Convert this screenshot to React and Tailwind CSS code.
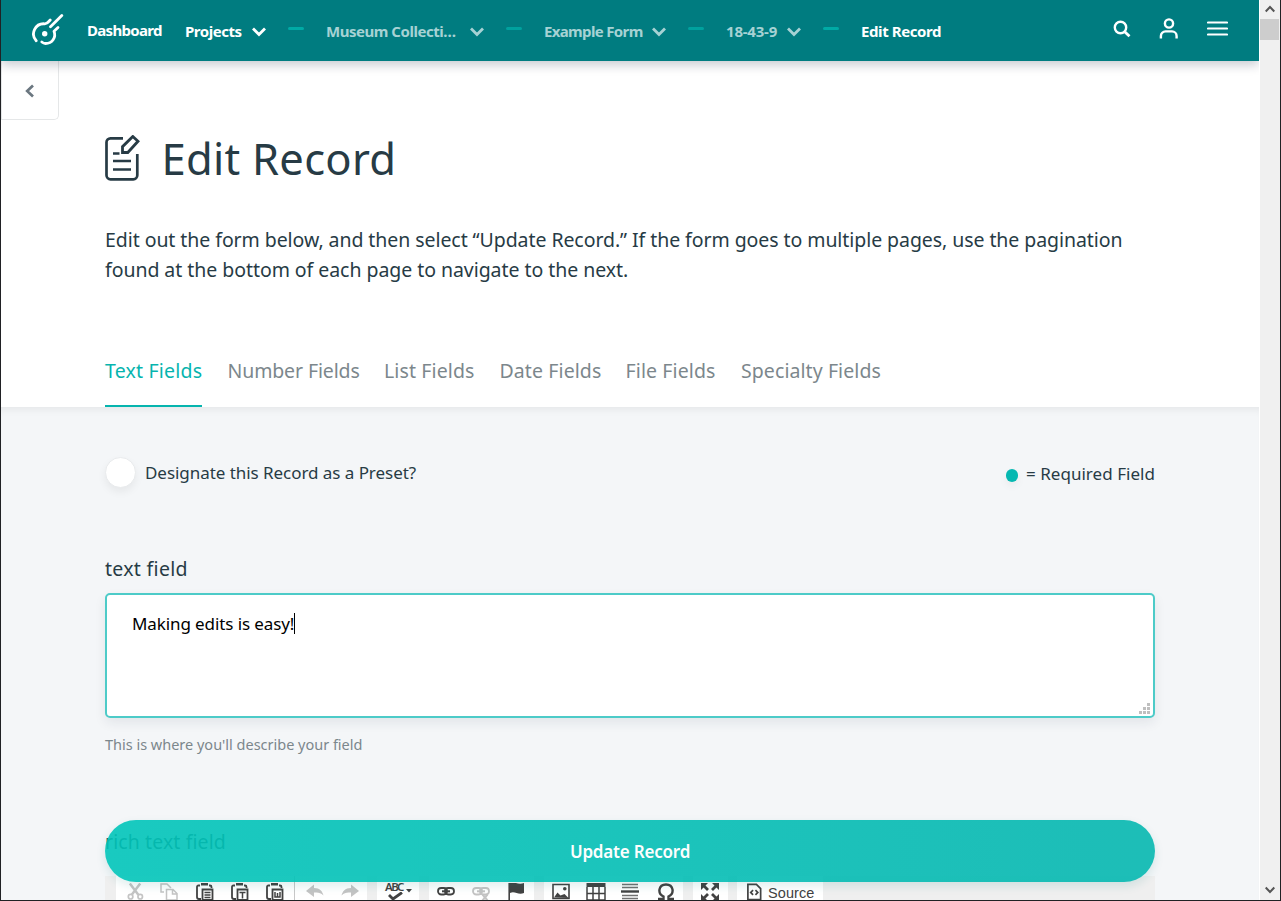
import React from "react";

function Chevron({ className }) {
  return (
    <svg className={"h-[10px] w-[14px] shrink-0 " + className} viewBox="0 0 14 10" fill="none" stroke="currentColor" strokeWidth="2.8">
      <path d="M1 1.4 7 7.4 13 1.4" />
    </svg>
  );
}

function Dash({ className }) {
  return <span className={"mb-[4px] h-[3px] w-4 shrink-0 rounded-full bg-[#00aaa5] " + className} />;
}

function Logo() {
  return (
    <svg className="h-[32px] w-[32px] shrink-0" viewBox="0 0 32 32" fill="none" stroke="#fff" strokeWidth="2.800" strokeLinecap="round" strokeLinejoin="round">
      <path d="M4.200 26.800A10.200 10.200 0 0 1 12.600 9.800C15 10 16 8.500 18.200 6" />
      <path d="M29.800 1.500 18.500 12.800" />
      <path d="M26 13.500 22 17.200C24.500 23.500 20 29.500 13.500 29.500 12 29.500 11 29 9.800 28" />
      <circle cx="12.700" cy="19.700" r="2.700" fill="#fff" stroke="none" />
    </svg>
  );
}

function Header() {
  return (
    <header className="relative z-20 flex h-[61px] shrink-0 items-center bg-[#007c80] pl-[31px] text-[15px] font-bold text-white shadow-[0_4px_10px_rgba(10,25,50,0.22)]">
      <div className="mb-[2px] flex">
        <Logo />
      </div>
      <span className="ml-[23px] w-[76px] whitespace-nowrap tracking-[-0.68px]">Dashboard</span>
      <span className="ml-[22px] mt-[2px] w-[58px] whitespace-nowrap tracking-[-0.45px]">Projects</span>
      <Chevron className="ml-[9px] mt-[2px]" />
      <Dash className="ml-[22px]" />
      <span className="ml-[22px] mt-[2px] w-[131px] whitespace-nowrap tracking-[-0.47px] text-[#a6d2d4]">Museum Collecti…</span>
      <Chevron className="ml-[13px] mt-[2px] text-[#a6d2d4]" />
      <Dash className="ml-[22px] opacity-80" />
      <span className="ml-[22px] mt-[2px] w-[100px] whitespace-nowrap tracking-[-0.65px] text-[#a6d2d4]">Example Form</span>
      <Chevron className="ml-[8px] mt-[2px] text-[#a6d2d4]" />
      <Dash className="ml-[22px] opacity-80" />
      <span className="ml-[22px] mt-[2px] w-[52px] whitespace-nowrap tracking-[-0.2px] text-[#a6d2d4]">18-43-9</span>
      <Chevron className="ml-[9px] mt-[2px] text-[#a6d2d4]" />
      <Dash className="ml-[22px]" />
      <span className="ml-[22px] mt-[2px] w-[82px] whitespace-nowrap tracking-[-0.4px]">Edit Record</span>
      <div className="ml-auto mr-[31px] flex items-center">
        <svg className="mb-[3px] mr-[28px] h-[18px] w-[18px]" viewBox="0 0 18 18" fill="none" stroke="currentColor" strokeWidth="2.400">
          <circle cx="7.500" cy="7.500" r="5.700" />
          <path d="m11.700 11.700 4.800 4.600" strokeWidth="2.800" />
        </svg>
        <svg className="mb-[4px] mr-[28px] h-[21px] w-[20px]" viewBox="0 0 20 21" fill="none" stroke="currentColor" strokeWidth="2.400">
          <circle cx="10" cy="5.500" r="4.100" />
          <path d="M1.900 20.500V18a4.600 4.600 0 0 1 4.600-4.600h6.500a4.600 4.600 0 0 1 4.600 4.600v2.500" />
        </svg>
        <svg className="mb-[4px] h-[15px] w-[21px]" viewBox="0 0 21 15" fill="none" stroke="currentColor" strokeWidth="2.200" strokeLinecap="round">
          <path d="M1 1.500h19M1 7.500h19M1 13.500h19" />
        </svg>
      </div>
    </header>
  );
}

function Tabs() {
  return (
    <nav className="flex h-[53px] whitespace-nowrap text-[19.5px] leading-[34px] text-[#7c878c]">
      <span className="w-[97px] border-b-2 border-[#06b4ae] tracking-[0.2px] text-[#06b4ae]">Text Fields</span>
      <span className="ml-[25.5px] w-[131.5px] tracking-[-0.12px]">Number Fields</span>
      <span className="ml-[25px] w-[91px] tracking-[0.12px]">List Fields</span>
      <span className="ml-[24.5px] w-[101.500px] tracking-[0.1px]">Date Fields</span>
      <span className="ml-[24.5px] w-[91px] tracking-[0.12px]">File Fields</span>
      <span className="ml-[24.5px] w-[141px] tracking-[0.08px]">Specialty Fields</span>
    </nav>
  );
}

function Icon({ className, children }) {
  return (
    <svg className={"h-[18px] shrink-0 " + className} viewBox="0 0 18 18" fill="none" stroke="currentColor" strokeWidth="1.8">
      {children}
    </svg>
  );
}

function PasteIcon({ className, children }) {
  return (
    <Icon className={"w-[18px] " + className}>
      <path d="M4 2.500H2.500Q1 2.500 1 4V14q0 2 2 2h2M13 2.500h1Q15.500 2.500 15.500 4V5" />
      <path d="M5 0h7v2.500H5z" fill="currentColor" stroke="none" />
      <path d="M6.500 6.500h10V17h-10z" fill="#fff" />
      {children}
    </Icon>
  );
}

function LinkIcon({ className, broken }) {
  return (
    <Icon className={"w-[18px] " + className}>
      <rect x="1" y="5" width="9" height="6.500" rx="3.200" />
      <rect x="8" y="5" width="9" height="6.500" rx="3.200" />
      <path d="M5 8.300h8" strokeWidth="2" />
      {broken && <path d="m10.500 11.500 5 6m0-6-5 6" strokeWidth="2" />}
    </Icon>
  );
}

function Toolbar() {
  return (
    <div className="flex h-[32px] shrink-0 items-stretch bg-[#efefef] pl-[11px] text-[#424242]">
      <div className="flex w-[251px] items-center bg-white">
        <Icon className="ml-[11px] w-[17px] text-[#c4c4c4]">
          <path d="M3 0 12 12M14 0 5 12" strokeWidth="2.600" />
          <circle cx="3.800" cy="14" r="2.400" />
          <circle cx="14" cy="14" r="2.400" />
        </Icon>
        <Icon className="ml-[16px] w-[18px] text-[#c4c4c4]">
          <path d="M4 9H1V1h6l4 4" strokeWidth="1.500" />
          <path d="M6.500 6.500H13l4 4V17H6.500zM12.500 6.500v4.500h4.500" fill="#fff" strokeWidth="1.500" />
        </Icon>
        <PasteIcon className="ml-[18px]">
          <path d="M8.500 9.500h6M8.500 12h6M8.500 14.500h6" strokeWidth="1.300" />
        </PasteIcon>
        <PasteIcon className="ml-[17px]">
          <path d="M8.500 9.500h6M11.500 9.500v6" strokeWidth="1.500" />
        </PasteIcon>
        <PasteIcon className="ml-[17px]">
          <path d="M9 9v5h5V9M11.500 10v4" strokeWidth="1.500" />
        </PasteIcon>
        <span className="ml-[10px] h-full w-px bg-[#c8c8c8]" />
        <Icon className="ml-[11px] w-[18px] text-[#c4c4c4]">
          <path d="M0 8 8 1.500V5c6 0 8.500 3.500 9.500 7.500-3-3-5-3.300-9.500-3V14z" fill="currentColor" stroke="none" />
        </Icon>
        <Icon className="ml-[17px] w-[18px] text-[#c4c4c4]">
          <path d="M18 8 10 1.500V5C4 5 1.500 8.500.5 12.500c3-3 5-3.300 9.500-3V14z" fill="currentColor" stroke="none" />
        </Icon>
      </div>
      <div className="ml-[10px] flex w-[42px] items-center bg-white">
        <div className="ml-[8px] flex w-[20px] flex-col">
          <span className="h-[9px] whitespace-nowrap text-[11.5px] font-semibold leading-[8px] tracking-[-1.6px]">ABC</span>
          <svg className="ml-[3px] h-[9px] w-[15px]" viewBox="0 0 15 9" fill="none" stroke="currentColor" strokeWidth="2.800">
            <path d="m1 3 4 4L14 .5" />
          </svg>
        </div>
        <svg className="mb-[3px] ml-[1px] h-[4px] w-[6px]" viewBox="0 0 6 4">
          <path d="M0 0h6L3 3.500z" fill="currentColor" />
        </svg>
      </div>
      <div className="ml-[10px] flex w-[105px] items-center bg-white">
        <LinkIcon className="ml-[8px]" />
        <LinkIcon className="ml-[17px] text-[#c4c4c4]" broken />
        <Icon className="ml-[17px] w-[18px]">
          <path d="M2.200 0v18" strokeWidth="1.600" />
          <path d="M3 0c5-2 8 2.500 14 0v10c-6 2.500-9-2.500-14 0z" fill="currentColor" stroke="none" />
        </Icon>
      </div>
      <div className="ml-[10px] flex w-[139px] items-center bg-white">
        <Icon className="ml-[8px] w-[18px]">
          <path d="M1 1.500h16v14H1z" strokeWidth="1.600" />
          <path d="m2 14.500 3.500-5 3 3 4-1.500 4 4z" fill="currentColor" stroke="none" />
          <circle cx="12.800" cy="5.800" r="1.800" fill="currentColor" stroke="none" />
        </Icon>
        <Icon className="ml-[16px] w-[20px]">
          <path d="M-.5 0h19v4h-19z" fill="currentColor" stroke="none" />
          <path d="M0 4v13h18V4M6 4v13M12 4v13M0 10.500h18" strokeWidth="1.500" />
        </Icon>
        <Icon className="ml-[15px] w-[18px]">
          <path d="M1 1.500h16M1 4.500h16M1 12.500h16M1 15.500h16" strokeWidth="1.300" opacity=".75" />
          <path d="M0 8.500h18" strokeWidth="2.400" />
        </Icon>
        <Icon className="ml-[18px] w-[18px]">
          <path d="M1 16h5.500v-2.500C3.500 12 2 9.500 2.500 6.500 3 3.500 5.500 1.500 9 1.500s6 2 6.500 5c.5 3-1 5.500-4 7V16H17" strokeWidth="2.400" />
        </Icon>
      </div>
      <div className="ml-[10px] flex w-[35px] items-center bg-white">
        <Icon className="ml-[8px] w-[18px]">
          <path d="m7 7-4-4M11 7l4-4M7 11l-4 4M11 11l4 4" strokeWidth="2.800" />
          <path d="M0 0h7L0 7zM18 0h-7l7 7zM0 18h7l-7-7zM18 18h-7l7-7z" fill="currentColor" stroke="none" />
        </Icon>
      </div>
      <div className="ml-[9px] flex w-[86px] items-center bg-white">
        <Icon className="ml-[9px] w-[17px]">
          <path d="M2 1h9l4.500 4.500V17H2z" strokeWidth="1.800" />
          <path d="M7.500 7 5 9.500 7.500 12M10 7l2.500 2.500L10 12" strokeWidth="1.800" />
        </Icon>
        <span className="ml-[5px] mt-[1px] font-['Liberation_Sans',Arial,sans-serif] text-[14.5px] leading-[18px] tracking-[0.08px]">Source</span>
      </div>
    </div>
  );
}

function Scrollbar() {
  return (
    <div className="flex w-[21px] shrink-0 flex-col items-center border-l border-white bg-[#f0f0f0] text-[#555]">
      <svg className="mt-[5px] h-[8px] w-[10px]" viewBox="0 0 10 8" fill="none" stroke="currentColor" strokeWidth="2">
        <path d="M.7 6.500 5 2l4.300 4.500" />
      </svg>
      <div className="mt-[6px] h-[21px] w-[19px] self-start bg-[#cdcdcd]" />
      <svg className="mb-[6px] mt-auto h-[8px] w-[10px]" viewBox="0 0 10 8" fill="none" stroke="currentColor" strokeWidth="2">
        <path d="M.7 1.500 5 6l4.300-4.500" />
      </svg>
    </div>
  );
}

export default function App() {
  return (
    <div className="flex h-[901px] w-[1281px] overflow-hidden border-x border-b border-[#202124] bg-white font-['Noto_Sans','Open_Sans',sans-serif] text-[#273b45]">
      <div className="relative flex w-[1258px] shrink-0 flex-col overflow-hidden">
        <Header />
        <div className="flex h-[59px] w-[58px] shrink-0 items-center justify-center rounded-br-[5px] border border-t-0 border-[#e5e7e8]">
          <svg className="mr-[1px] mt-[2px] h-[14px] w-[9px]" viewBox="0 0 9 14" fill="none" stroke="#6b7780" strokeWidth="2.700">
            <path d="M8 1.500 2.200 7 8 12.500" />
          </svg>
        </div>
        <section className="flex h-[287px] shrink-0 flex-col px-[104px]">
          <div className="flex h-[77px] items-center">
            <svg className="mb-[2px] h-[46px] w-[35px]" viewBox="0 0 35 46" fill="none" stroke="currentColor" strokeWidth="2.700">
              <path d="M18 3.300H5.500a4 4 0 0 0-4 4v33a4 4 0 0 0 4 4h22.800a4 4 0 0 0 4-4V19" />
              <path d="M17.500 17.500v-5.800L27.800 1.500l5.200 4.800-10.200 11.200z" strokeWidth="2.800" />
              <path d="M8 18.500h6.500M8 26h18M8 34.500h18" strokeWidth="2.600" />
            </svg>
            <h1 className="mb-[1px] ml-[21.500px] w-[240px] whitespace-nowrap text-[43.5px] leading-[60px] tracking-[0.27px]">Edit Record</h1>
          </div>
          <div className="mt-[28px] whitespace-nowrap text-[19.5px] leading-[30px]">
            <p className="tracking-[-0.066px]">Edit out the form below, and then select “Update Record.” If the form goes to multiple pages, use the pagination</p>
            <p className="tracking-[-0.05px]">found at the bottom of each page to navigate to the next.</p>
          </div>
          <div className="mt-auto">
            <Tabs />
          </div>
        </section>
        <main className="flex flex-1 flex-col bg-[#f4f6f8] px-[104px] shadow-[inset_0_8px_8px_-6px_rgba(0,0,0,0.07)]">
          <div className="mt-[50px] flex h-[32px] items-center justify-between whitespace-nowrap text-[17px]">
            <div className="flex items-center">
              <span className="mb-[1px] h-[31px] w-[31px] rounded-full border border-[#e9ebed] bg-white shadow-[0_4px_8px_rgba(0,0,0,0.06)]" />
              <span className="ml-[9px] tracking-[-0.05px]">Designate this Record as a Preset?</span>
            </div>
            <div className="flex items-center">
              <span className="mt-[4px] h-[13px] w-[12px] rounded-full bg-[#06b8b1] shadow-[0_4px_8px_rgba(0,0,0,0.05)]" />
              <span className="ml-[8px] mt-[2px] w-[129px] tracking-[0.03px]">= Required Field</span>
            </div>
          </div>
          <label className="mt-[64px] h-[40px] text-[19.5px] leading-[32px] tracking-[0.3px]">text field</label>
          <div className="flex h-[125px] w-[1050px] shrink-0 justify-between rounded-[5px] border-2 border-[#4dcbc8] bg-white shadow-[0_5px_12px_rgba(20,40,60,0.08)]">
            <div className="ml-[25px] mt-[17px] flex h-[22px] items-center text-[17px] text-black">
              <span className="mt-[1px] whitespace-nowrap tracking-[-0.1px]">Making edits is easy!</span>
              <span className="h-[21px] w-px bg-black" />
            </div>
            <svg className="mb-[2px] mr-[3px] h-[11px] w-[11px] self-end" viewBox="0 0 11 11" fill="#bfbfbf">
              <path d="M8 0h3v3H8zM4 4h3v3H4zM8 4h3v3H8zM0 8h3v3H0zM4 8h3v3H4zM8 8h3v3H8z" />
            </svg>
          </div>
          <p className="mt-[14px] h-[25px] text-[14.5px] leading-[24px] tracking-[-0.01px] text-[#7c878c]">This is where you'll describe your field</p>
          <div className="mt-[69px] h-[50px] shrink-0 text-[19.5px] leading-[32px] tracking-[0.1px]">rich text field</div>
          <Toolbar />
        </main>
        <button className="absolute bottom-[18px] left-[104px] flex h-[62px] w-[1050px] items-center justify-center rounded-full bg-linear-to-r from-[#02c6ba] to-[#06b8b1] text-[17px] font-semibold text-white opacity-90 shadow-[0_4px_10px_rgba(0,130,130,0.14)]">
          <span className="mt-[2px] whitespace-nowrap tracking-[-0.2px]">Update Record</span>
        </button>
      </div>
      <Scrollbar />
    </div>
  );
}
